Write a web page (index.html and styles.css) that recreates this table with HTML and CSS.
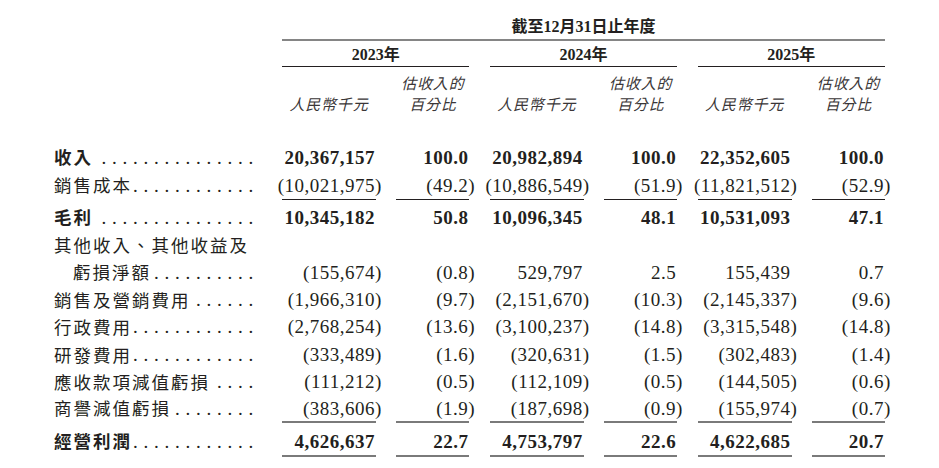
FILE: index.html
```html
<!DOCTYPE html>
<html lang="zh-Hant">
<head>
<meta charset="utf-8">
<title>經營利潤</title>
<link rel="stylesheet" href="styles.css">
</head>
<body>
<div class="sheet">
  <div class="grid head-title">
    <div class="title">截至12月31日止年度</div>
  </div>
  <div class="grid head-years">
    <div class="year y1">2023年</div>
    <div class="year">2024年</div>
    <div class="year">2025年</div>
  </div>
  <div class="grid head-units">
    <div class="unit u1">人民幣千元</div>
    <div class="unit">估收入的<br>百分比</div>
    <div class="unit">人民幣千元</div>
    <div class="unit">估收入的<br>百分比</div>
    <div class="unit">人民幣千元</div>
    <div class="unit">估收入的<br>百分比</div>
  </div>

  <div class="grid row r-first b">
    <div class="label"><span>收入</span><span class="dots">...............</span></div>
    <div class="n">20,367,157</div><div class="n">100.0</div>
    <div class="n">20,982,894</div><div class="n">100.0</div>
    <div class="n">22,352,605</div><div class="n">100.0</div>
  </div>
  <div class="grid row r-sub ul">
    <div class="label"><span>銷售成本</span><span class="dots">............</span></div>
    <div class="n"><span class="neg">(10,021,975)</span></div><div class="n"><span class="neg">(49.2)</span></div>
    <div class="n"><span class="neg">(10,886,549)</span></div><div class="n"><span class="neg">(51.9)</span></div>
    <div class="n"><span class="neg">(11,821,512)</span></div><div class="n"><span class="neg">(52.9)</span></div>
  </div>
  <div class="grid row r-gross b">
    <div class="label"><span>毛利</span><span class="dots">...............</span></div>
    <div class="n">10,345,182</div><div class="n">50.8</div>
    <div class="n">10,096,345</div><div class="n">48.1</div>
    <div class="n">10,531,093</div><div class="n">47.1</div>
  </div>
  <div class="grid row">
    <div class="label"><span>其他收入、其他收益及</span></div>
    <div class="n"></div><div class="n"></div><div class="n"></div>
    <div class="n"></div><div class="n"></div><div class="n"></div>
  </div>
  <div class="grid row">
    <div class="label indent"><span>虧損淨額</span><span class="dots">..........</span></div>
    <div class="n"><span class="neg">(155,674)</span></div><div class="n"><span class="neg">(0.8)</span></div>
    <div class="n">529,797</div><div class="n">2.5</div>
    <div class="n">155,439</div><div class="n">0.7</div>
  </div>
  <div class="grid row">
    <div class="label"><span>銷售及營銷費用</span><span class="dots">......</span></div>
    <div class="n"><span class="neg">(1,966,310)</span></div><div class="n"><span class="neg">(9.7)</span></div>
    <div class="n"><span class="neg">(2,151,670)</span></div><div class="n"><span class="neg">(10.3)</span></div>
    <div class="n"><span class="neg">(2,145,337)</span></div><div class="n"><span class="neg">(9.6)</span></div>
  </div>
  <div class="grid row">
    <div class="label"><span>行政費用</span><span class="dots">............</span></div>
    <div class="n"><span class="neg">(2,768,254)</span></div><div class="n"><span class="neg">(13.6)</span></div>
    <div class="n"><span class="neg">(3,100,237)</span></div><div class="n"><span class="neg">(14.8)</span></div>
    <div class="n"><span class="neg">(3,315,548)</span></div><div class="n"><span class="neg">(14.8)</span></div>
  </div>
  <div class="grid row">
    <div class="label"><span>研發費用</span><span class="dots">............</span></div>
    <div class="n"><span class="neg">(333,489)</span></div><div class="n"><span class="neg">(1.6)</span></div>
    <div class="n"><span class="neg">(320,631)</span></div><div class="n"><span class="neg">(1.5)</span></div>
    <div class="n"><span class="neg">(302,483)</span></div><div class="n"><span class="neg">(1.4)</span></div>
  </div>
  <div class="grid row">
    <div class="label"><span>應收款項減值虧損</span><span class="dots">....</span></div>
    <div class="n"><span class="neg">(111,212)</span></div><div class="n"><span class="neg">(0.5)</span></div>
    <div class="n"><span class="neg">(112,109)</span></div><div class="n"><span class="neg">(0.5)</span></div>
    <div class="n"><span class="neg">(144,505)</span></div><div class="n"><span class="neg">(0.6)</span></div>
  </div>
  <div class="grid row ul2">
    <div class="label"><span>商譽減值虧損</span><span class="dots">........</span></div>
    <div class="n"><span class="neg">(383,606)</span></div><div class="n"><span class="neg">(1.9)</span></div>
    <div class="n"><span class="neg">(187,698)</span></div><div class="n"><span class="neg">(0.9)</span></div>
    <div class="n"><span class="neg">(155,974)</span></div><div class="n"><span class="neg">(0.7)</span></div>
  </div>
  <div class="grid row r-total ul2 b">
    <div class="label"><span>經營利潤</span><span class="dots">............</span></div>
    <div class="n">4,626,637</div><div class="n">22.7</div>
    <div class="n">4,753,797</div><div class="n">22.6</div>
    <div class="n">4,622,685</div><div class="n">20.7</div>
  </div>
</div>
</body>
</html>
```

FILE: styles.css
```css
* {
  box-sizing: border-box;
  margin: 0;
  padding: 0;
}

html,
body {
  background: #ffffff;
}

body {
  margin: 0;
  color: #231f20;
  font-family: "Liberation Serif", "Noto Sans CJK TC", serif;
}

.sheet {
  padding: 15px 0 0 54px;
  width: 939px;
}

.grid {
  display: grid;
  grid-template-columns: 207.6px 94px 73px 94px 73px 94px 73px;
  column-gap: 20.4px;
}

/* ---------- header ---------- */
.title {
  grid-column: 2 / 8;
  height: 26px;
  line-height: 24px;
  text-align: center;
  font-size: 16px;
  font-weight: 700;
  border-bottom: 2px solid #858585;
}

.head-years {
  height: 26px;
}

.year {
  grid-column: span 2;
  padding-top: 3px;
  line-height: 22px;
  text-align: center;
  font-size: 16px;
  font-weight: 700;
  border-bottom: 1px solid #231f20;
}

.year.y1 {
  grid-column: 2 / span 2;
}

.head-units {
  align-items: end;
  padding-top: 4.5px;
  margin-bottom: 29.5px;
}

.unit {
  text-align: center;
  font-family: "Noto Sans CJK TC", sans-serif;
  font-style: italic;
  font-size: 15px;
  line-height: 21px;
  letter-spacing: 0.8px;
  color: #3a3637;
}

.unit.u1 {
  grid-column: 2;
}

/* ---------- body rows ---------- */
.row {
  height: 27.4px;
  align-items: stretch;
}

.row.r-first {
  height: 28px;
}

.row.r-sub {
  height: 29px;
}

.row.r-gross {
  margin-top: 3px;
  height: 28px;
}

.row.r-total {
  margin-top: 5px;
  height: 29px;
}

.label {
  display: flex;
  align-items: center;
  font-family: "Noto Sans CJK TC", sans-serif;
  font-size: 17.5px;
  letter-spacing: 2px;
  line-height: 1;
  white-space: nowrap;
}

.label.indent {
  padding-left: 19px;
}

.dots {
  margin-left: auto;
  margin-right: 2.6px;
  font-family: "Liberation Serif", serif;
  font-size: 19px;
  font-weight: 400;
  letter-spacing: 5.75px;
}

.n {
  display: flex;
  align-items: center;
  justify-content: flex-end;
  padding-right: 1px;
  font-size: 19px;
  letter-spacing: 0.5px;
  line-height: 1;
  white-space: nowrap;
}

.neg {
  margin-right: -6.8px;
}

.b .label,
.b .n {
  font-weight: 700;
}

.ul .label,
.ul .n {
  border-bottom: 1px solid transparent;
}

.ul .n {
  border-bottom-color: #231f20;
}

.ul2 .label,
.ul2 .n {
  border-bottom: 2px solid transparent;
}

.ul2 .n {
  border-bottom-color: #7a7a7a;
}
```
